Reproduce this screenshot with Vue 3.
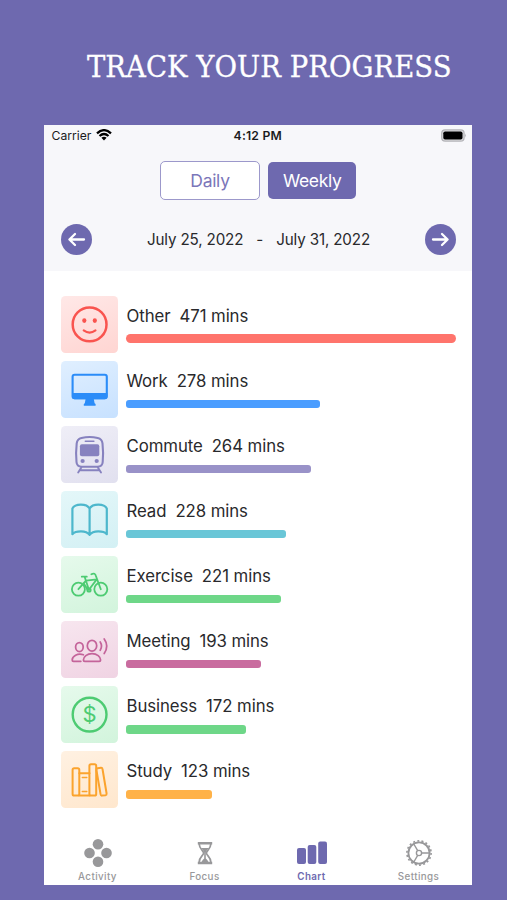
<script setup>
import { ref, computed } from 'vue'

const mode = ref('Weekly')

const activities = ref([
  { name: 'Other', mins: 471 },
  { name: 'Work', mins: 278 },
  { name: 'Commute', mins: 264 },
  { name: 'Read', mins: 228 },
  { name: 'Exercise', mins: 221 },
  { name: 'Meeting', mins: 193 },
  { name: 'Business', mins: 172 },
  { name: 'Study', mins: 123 },
])

const tabs = ['Activity', 'Focus', 'Chart', 'Settings']
const activeTab = ref('Chart')

const maxMins = computed(() => Math.max(...activities.value.map((a) => a.mins)))

const barWidth = (mins) => (mins / maxMins.value) * 100 + '%'
</script>

<template>
  <main>
    <h1>TRACK YOUR PROGRESS</h1>

    <div class="phone">
      <header>
        <div class="status">
          <div class="carrier">
            <span>Carrier</span>
            <svg width="16" height="12" viewBox="0 0 16 12" fill="none" stroke="#000" stroke-width="2.3">
              <path d="M1 4.3Q8 -2 15 4.3" />
              <path d="M3.5 7Q8 3 12.5 7" />
              <path d="M5.4 8.7Q8 6.6 10.6 8.7L8 11.5Z" fill="#000" stroke="none" />
            </svg>
          </div>
          <div class="time">4:12 PM</div>
          <div class="battery">
            <svg width="26" height="13" viewBox="0 0 26 13">
              <rect x="0.7" y="0.9" width="22.4" height="11.2" rx="3.4" fill="#dcdcdf" stroke="#b4b4b8" stroke-width="1.2" />
              <rect x="2.3" y="2.5" width="19.2" height="8" rx="1.8" fill="#000" />
              <path d="M24.2 4.6q1.5 1.9 0 3.8z" fill="#a9a9ad" />
            </svg>
          </div>
        </div>

        <div class="modes">
          <button class="mode daily" @click="mode = 'Daily'">Daily</button>
          <button class="mode weekly" @click="mode = 'Weekly'">Weekly</button>
        </div>

        <div class="range">
          <button class="arrow">
            <svg width="31" height="31" viewBox="0 0 31 31">
              <path d="M23 15.5H8.6M14 10L8.4 15.5L14 21" />
            </svg>
          </button>
          <div class="dates">
            <span>July 25, 2022</span>
            <span>-</span>
            <span>July 31, 2022</span>
          </div>
          <button class="arrow">
            <svg width="31" height="31" viewBox="0 0 31 31">
              <path d="M8 15.5H22.4M17 10L22.6 15.5L17 21" />
            </svg>
          </button>
        </div>
      </header>

      <ul class="list">
        <li v-for="item in activities" :key="item.name" :class="item.name.toLowerCase()">
          <div class="tile">
            <svg width="57" height="57" viewBox="0 0 57 57">
              <g v-if="item.name === 'Other'">
                <circle cx="28.6" cy="28.4" r="16.9" stroke-width="2.5" />
                <ellipse class="solid" cx="23.3" cy="24.6" rx="2.1" ry="2.4" />
                <ellipse class="solid" cx="33.8" cy="24.6" rx="2.1" ry="2.4" />
                <path d="M22.7 34.3Q28.6 38.8 34.5 34.3" />
              </g>
              <g v-else-if="item.name === 'Work'">
                <rect x="11.6" y="13.8" width="34.2" height="23.4" rx="2" />
                <path class="solid" d="M11 32h35.4v3.5q0 2.7-2.7 2.7h-30q-2.7 0-2.7-2.7zM24.6 38h8.2l.8 4.3 1 .8v1.6H22.8v-1.6l1-.8z" />
              </g>
              <g v-else-if="item.name === 'Commute'">
                <path d="M20.5 12.1Q28.6 10 36.7 12.1Q41 13.2 41.5 17.3Q42.6 27 41.7 36Q41.4 40.7 36.5 40.7H20.7Q15.8 40.7 15.5 36Q14.6 27 15.7 17.3Q16.2 13.2 20.5 12.1Z" />
                <rect class="solid" x="18.9" y="18.2" width="19.4" height="12" rx="2" />
                <path d="M24.3 15.2h8.6" stroke-width="1.5" />
                <circle class="solid" cx="21.6" cy="35" r="2.1" />
                <circle class="solid" cx="35.7" cy="35" r="2.1" />
                <path d="M20.3 41.5L17.2 46.5M36.9 41.5L40 46.5M19.3 44.2H38" stroke-width="1.9" />
              </g>
              <g v-else-if="item.name === 'Read'" stroke-width="2.2">
                <path d="M28.6 17.5C25.5 12.2 14 12.4 11.4 17.5V43.2C14.5 39.8 25 39 28.6 43.8C32.2 39 42.7 39.8 45.8 43.2V17.5C43.2 12.4 31.7 12.2 28.6 17.5V43.5" />
              </g>
              <g v-else-if="item.name === 'Exercise'" stroke-width="1.8">
                <circle cx="17.4" cy="33.2" r="6.5" />
                <circle cx="39.8" cy="33.2" r="6.5" />
                <circle cx="28" cy="34" r="1.7" />
                <path d="M20.8 20.7H25.8M23.7 21L28 34M17.4 33.2L25 24.6L35.7 23.4L28.5 33M22.5 27L26.5 33.5M30.3 18.2Q34.3 16.3 35 20.3L39.8 33.2" />
              </g>
              <g v-else-if="item.name === 'Meeting'" stroke-width="1.75">
                <ellipse cx="18.4" cy="26" rx="3.8" ry="4.5" />
                <ellipse cx="31" cy="24.7" rx="4.7" ry="5.4" />
                <path d="M31 32.5C26 32.5 22.4 36 22.4 39Q22.4 40.3 23.8 40.3H38.2Q39.6 40.3 39.6 39C39.6 36 36 32.5 31 32.5Z" />
                <path d="M22.4 33.8C16.5 31.7 11.2 35.5 11.2 39Q11.2 40.3 12.5 40.3H19.8" />
                <path d="M39.2 21Q41.8 25 39.2 29.3M43.2 18Q48.3 25 43.2 32.5" />
              </g>
              <g v-else-if="item.name === 'Business'">
                <circle cx="28.6" cy="28.6" r="16.9" stroke-width="2.4" />
                <text x="28.6" y="36.3" text-anchor="middle">$</text>
              </g>
              <g v-else stroke-width="2">
                <rect x="11.6" y="17.2" width="6.7" height="27.4" rx="1.6" />
                <path d="M18.3 22.2H28.5M18.3 44.6H28.5" />
                <path d="M21.3 26.5h4.5M21.3 40.5h4.5" stroke-width="1.5" />
                <rect x="28.4" y="13.2" width="6.8" height="31.4" rx="1.6" />
                <path d="M35.4 19Q35.3 17.5 36.6 17.3L40 16.8Q41.3 16.6 41.5 18L45.6 42.5Q45.8 44 44.5 44.2L41.2 44.6Q39.9 44.8 39.6 43.4L35.4 19Z" />
              </g>
            </svg>
          </div>
          <div class="info">
            <p><span>{{ item.name }}</span><span>{{ item.mins }} mins</span></p>
            <div class="bar" :style="{ width: barWidth(item.mins) }"></div>
          </div>
        </li>
      </ul>

      <nav>
        <a v-for="tab in tabs" :key="tab" :class="{ active: tab === activeTab }" @click="activeTab = tab">
          <svg width="32" height="30" viewBox="0 0 32 30">
            <g v-if="tab === 'Activity'" fill="currentColor">
              <circle cx="16" cy="6.2" r="5.3" />
              <circle cx="7.5" cy="15" r="5.3" />
              <circle cx="24.5" cy="15" r="5.3" />
              <circle cx="16" cy="23.7" r="5.3" />
            </g>
            <g v-else-if="tab === 'Focus'" fill="none" stroke="currentColor">
              <path d="M8.8 5.2H23.2M8.8 25H23.2" stroke-width="2.6" />
              <path d="M10.2 6C10.2 11 14.6 12.5 14.6 15S10.2 19 10.2 24M21.8 6C21.8 11 17.4 12.5 17.4 15S21.8 19 21.8 24" stroke-width="1.7" />
              <path d="M12 10H20Q17.5 12 16.8 14.5V20.5Q18.5 21.5 19.5 24H12.5Q13.5 21.5 15.2 20.5V14.5Q14.5 12 12 10z" fill="currentColor" stroke="none" />
            </g>
            <g v-else-if="tab === 'Chart'" fill="currentColor">
              <rect x="1" y="10" width="9" height="16" rx="2" />
              <rect x="11.7" y="7" width="8.6" height="19" rx="2" />
              <rect x="22.2" y="3.5" width="8.8" height="22.5" rx="2" />
            </g>
            <g v-else fill="none" stroke="currentColor">
              <circle cx="16" cy="15" r="10.6" stroke-width="1.8" />
              <circle cx="16" cy="15" r="12.1" stroke-width="1.6" stroke-dasharray="2 2.224" />
              <circle cx="16" cy="15" r="2.6" stroke-width="1.4" />
              <path d="M18.6 15H26.4M14.7 12.7L10.8 6M14.7 17.3L10.8 24" stroke-width="1.4" />
            </g>
          </svg>
          <span>{{ tab }}</span>
        </a>
      </nav>
    </div>
  </main>
</template>

<style>
body {
  background-color: #6e69af;
}
</style>

<style scoped>
main {
  box-sizing: border-box;
  width: 507px;
  height: 900px;
  overflow: hidden;
  padding-left: 44px;
  background-color: #6e69af;
  font-family: Inter, "Liberation Sans", sans-serif;
  color: #29292c;
}

h1 {
  margin: 0;
  height: 124.5px;
  padding: 48px 0 0 43px;
  box-sizing: border-box;
  font-family: "DejaVu Serif Condensed", "DejaVu Serif", serif;
  font-stretch: condensed;
  font-size: 30.5px;
  font-weight: normal;
  line-height: 38px;
  letter-spacing: 0.06px;
  white-space: nowrap;
  color: #fff;
  -webkit-text-stroke: 0.3px #fff;
}

.phone {
  width: 428px;
  height: 760px;
  background-color: #fff;
  display: flex;
  flex-direction: column;
}

header {
  height: 146.5px;
  background-color: #f7f7fa;
}

.status {
  display: grid;
  grid-template-columns: 1fr auto 1fr;
  align-items: center;
  height: 21px;
  padding: 0 5px 0 7.5px;
  font-size: 12.2px;
  color: #1b1b1d;
}

.carrier {
  display: flex;
  align-items: center;
  gap: 5px;
}

.time {
  padding-right: 3px;
  font-weight: 600;
  letter-spacing: 0.2px;
}

.battery {
  display: flex;
  justify-content: flex-end;
}

.modes {
  display: flex;
  justify-content: center;
  align-items: center;
  gap: 8px;
  height: 39px;
  margin-top: 15.5px;
}

.mode {
  box-sizing: border-box;
  padding: 0;
  font-family: inherit;
  font-size: 17.5px;
  letter-spacing: -0.3px;
  border-radius: 5px;
  cursor: pointer;
}

.daily {
  width: 100.5px;
  height: 39px;
  border: 1.5px solid #9c98cb;
  background-color: #fff;
  color: #7b76b9;
}

.weekly {
  width: 88px;
  height: 36.5px;
  border: none;
  background-color: #6e69af;
  color: #fff;
}

.range {
  display: flex;
  justify-content: space-between;
  align-items: center;
  margin-top: 23.5px;
  padding: 0 16.5px;
}

.arrow {
  width: 31px;
  height: 31px;
  padding: 0;
  border: none;
  border-radius: 50%;
  background-color: #6e69af;
  cursor: pointer;
}

.arrow svg {
  display: block;
  fill: none;
  stroke: #fff;
  stroke-width: 2.3;
  stroke-linecap: round;
  stroke-linejoin: round;
}

.dates {
  display: flex;
  gap: 13px;
  padding-left: 1px;
  font-size: 15.2px;
  letter-spacing: -0.15px;
}

.list {
  flex: 1;
  margin: 0;
  padding: 24.5px 16.5px 0 17px;
  list-style: none;
}

li {
  display: flex;
  height: 57px;
  gap: 8px;
  margin-bottom: 8.1px;
}

.tile {
  width: 57px;
  height: 57px;
  border-radius: 4.5px;
}

.tile svg {
  display: block;
  fill: none;
  stroke: currentColor;
  stroke-width: 2.1;
  stroke-linecap: round;
  stroke-linejoin: round;
}

.tile .solid {
  fill: currentColor;
  stroke: none;
}

.tile text {
  font-size: 22px;
  fill: currentColor;
  stroke: none;
}

.info {
  flex: 1;
}

.info p {
  display: flex;
  gap: 9px;
  margin: 9.1px 0 7.9px;
  padding-left: 0.5px;
  font-size: 16.8px;
  line-height: 22px;
  letter-spacing: -0.08px;
}

.bar {
  height: 8.5px;
  border-radius: 3px;
}

.other .tile {
  color: #f9544f;
  background: linear-gradient(160deg, #ffe8e7, #ffd5d2);
}

.other .bar {
  border-radius: 4.5px;
  background-color: #ff746c;
}

.work .tile {
  color: #2b8cf8;
  background: linear-gradient(160deg, #e0efff, #c7e1ff);
}

.work .bar {
  background-color: #4a9dff;
}

.commute .tile {
  color: #8782bf;
  background: linear-gradient(160deg, #efeef7, #e1e0ef);
}

.commute .bar {
  background-color: #9992c8;
}

.read .tile {
  color: #4db7cc;
  background: linear-gradient(160deg, #e4f7f9, #d3f0f4);
}

.read .bar {
  background-color: #69c6d7;
}

.exercise .tile,
.business .tile {
  color: #4dcb72;
  background: linear-gradient(160deg, #e6faec, #d2f4dc);
}

.exercise .bar,
.business .bar {
  background-color: #6ed788;
}

.meeting .tile {
  color: #c4649a;
  background: linear-gradient(160deg, #f7e6ef, #f0d3e3);
}

.meeting .bar {
  background-color: #c96c9f;
}

.study .tile {
  color: #fba32d;
  background: linear-gradient(160deg, #fff1e2, #ffe7cd);
}

.study .bar {
  background-color: #ffb248;
}

nav {
  display: flex;
  height: 46.5px;
}

nav a {
  flex: 1;
  display: flex;
  flex-direction: column;
  align-items: center;
  color: #98989a;
  font-size: 9.8px;
  font-weight: 500;
  line-height: 12px;
  letter-spacing: 0.4px;
  cursor: pointer;
}

nav a span {
  margin-top: 3px;
}

nav a.active {
  color: #6e69af;
  font-weight: 600;
}
</style>
